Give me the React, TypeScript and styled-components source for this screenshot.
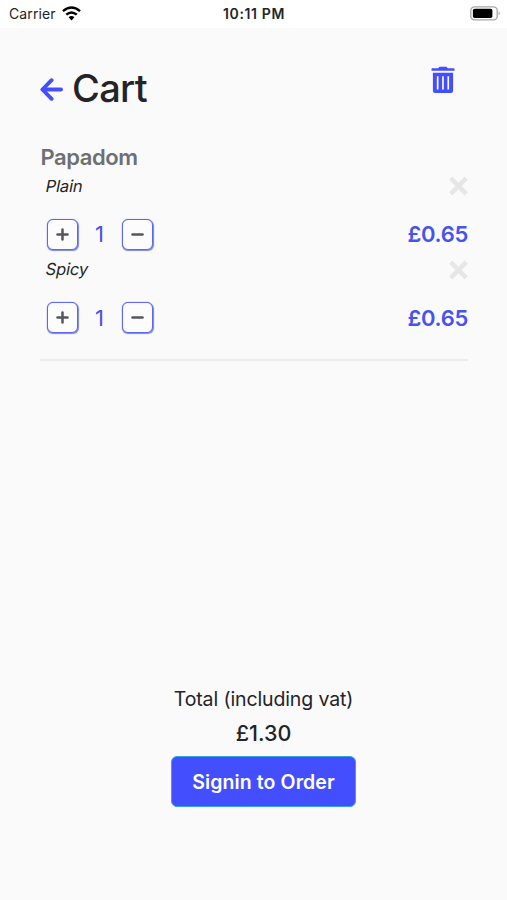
import React from "react";
import styled, { createGlobalStyle } from "styled-components";

const GlobalStyle = createGlobalStyle`
  *, *::before, *::after { box-sizing: border-box; }
  body {
    margin: 0;
    background: #fafafa;
    font-family: Inter, "Liberation Sans", sans-serif;
    color: #222428;
  }
  button { font: inherit; padding: 0; cursor: pointer; }
  svg { display: block; }
`;

const Screen = styled.div`
  width: 507px;
  height: 900px;
  display: flex;
  flex-direction: column;
  background: #fafafa;
  overflow: hidden;
`;

const StatusBar = styled.header`
  height: 28px;
  flex: none;
  display: grid;
  grid-template-columns: 1fr auto 1fr;
  align-items: center;
  padding: 0 6px 0 9px;
  background: #fff;
  font-size: 14px;
  line-height: 28px;
`;

const Carrier = styled.div`
  display: flex;
  align-items: center;
  gap: 6px;
  letter-spacing: 0.1px;

  svg { margin-top: -2px; }
`;

const Clock = styled.div`
  font-weight: 600;
  letter-spacing: 0.65px;
  margin: 0 2px 0 0;
`;

const BatterySlot = styled.div`
  justify-self: end;

  svg { margin-top: -2px; }
`;

const Content = styled.main`
  flex: 1;
  display: flex;
  flex-direction: column;
  padding: 34px 39px 93px 40px;
`;

const TitleRow = styled.div`
  display: flex;
  align-items: flex-start;
  justify-content: space-between;
  height: 82px;
`;

const TitleGroup = styled.div`
  display: flex;
  align-items: center;
  gap: 9px;
  height: 52px;
`;

const Title = styled.h1`
  margin: 0;
  font-size: 38px;
  font-weight: 500;
  letter-spacing: -0.7px;
  line-height: 52px;
`;

const IconButton = styled.button`
  border: 0;
  background: none;
  color: #434fff;
`;

const BackButton = styled(IconButton)`
  padding-top: 3px;
`;

const TrashButton = styled(IconButton)`
  margin: 4px 13px 0 0;
`;

const Category = styled.section`
  border-bottom: 2px solid #ececec;
  height: 217px;
`;

const CategoryName = styled.h2`
  margin: 0;
  height: 28px;
  padding-left: 0.5px;
  font-size: 22px;
  font-weight: 600;
  letter-spacing: -0.45px;
  line-height: 26px;
  color: #6c7075;
`;

const CartItem = styled.article`
  height: 83.5px;
`;

const ItemHeader = styled.div`
  display: flex;
  align-items: center;
  justify-content: space-between;
  height: 28px;
  padding-left: 6px;
`;

const Variant = styled.span`
  font-size: 16.5px;
  letter-spacing: -0.15px;
  line-height: 26px;
  margin-bottom: 1px;
  transform: skewX(-11deg);
`;

const RemoveButton = styled(IconButton)`
  color: #e6e6e7;
`;

const ItemFooter = styled.div`
  display: flex;
  align-items: center;
  justify-content: space-between;
  height: 32px;
  margin-top: 18px;
  padding-left: 7px;
  color: #4753f0;
  font-size: 22px;
`;

const Stepper = styled.div`
  display: flex;
  align-items: center;
`;

const StepButton = styled.button`
  display: flex;
  align-items: center;
  justify-content: center;
  width: 31px;
  height: 31px;
  border: 1px solid #5b66f5;
  border-radius: 6px;
  background: #fcfcfc;
  color: #55565c;
  box-shadow: 0.5px 1px 1px #8086d8, 0 0 1px #7d86f5;
`;

const Quantity = styled.span`
  width: 44px;
  padding-right: 1px;
  text-align: center;
`;

const Price = styled.span`
  font-weight: 600;
  letter-spacing: -0.3px;
`;

const Summary = styled.footer`
  display: flex;
  flex-direction: column;
  align-items: center;
  align-self: center;
  margin-top: auto;
  margin-left: 19px;
`;

const TotalLabel = styled.div`
  font-size: 19.5px;
  letter-spacing: -0.12px;
  line-height: 34px;
`;

const TotalAmount = styled.div`
  font-size: 21.5px;
  font-weight: 500;
  line-height: 34px;
  margin-bottom: 6px;
`;

const OrderButton = styled.button`
  width: 185px;
  height: 51px;
  border: 1px solid #36a5dc;
  border-radius: 6px;
  background: #434fff;
  color: #fff;
  font-size: 19.5px;
  font-weight: 600;
  letter-spacing: 0.1px;
`;

const WifiIcon = () => (
  <svg width="19" height="15" viewBox="0 0 18 14" fill="none" stroke="#000" strokeWidth="2.3">
    <path d="M.9 4.8Q9-2.1 17.1 4.8" />
    <path d="M4 8.1q5-4.3 10 0" />
    <path d="M9 13.6 6.2 10.6q2.8-2.3 5.6 0Z" fill="#000" stroke="none" />
  </svg>
);

const BatteryIcon = () => (
  <svg width="31" height="15" viewBox="0 0 31 15">
    <rect x=".8" y=".8" width="26.4" height="13" rx="3.6" fill="#fff" stroke="#a5a5a5" strokeWidth="1.3" />
    <rect x="2.9" y="2.8" width="19.5" height="9.2" rx="1.8" fill="#000" />
    <path d="M28.6 5q2.4 2.3 0 4.6Z" fill="#a5a5a5" />
  </svg>
);

const ArrowIcon = () => (
  <svg width="23" height="23" viewBox="0 0 23 23" fill="none" stroke="currentColor" strokeWidth="3.9" strokeLinecap="round" strokeLinejoin="round">
    <path d="M11.6 2.2 2.4 11.5l9.2 9.3" />
    <path d="M3 11.5h18" />
  </svg>
);

const TrashIcon = () => (
  <svg width="24" height="28" viewBox="0 0 24 28" fill="currentColor">
    <path d="M8.5.7h7l1.4 1.5h5.6c.7 0 1 .4 1 1v1.6H.5V3.2c0-.6.4-1 1-1h5.6Z" />
    <path fillRule="evenodd" d="M1.9 6.7h20.2v17.9a2.5 2.5 0 0 1-2.5 2.5H4.4a2.5 2.5 0 0 1-2.5-2.5ZM5.8 10.2v13.4h1.7V10.2Zm5.3 0v13.4h1.7V10.2Zm5.3 0v13.4h1.7V10.2Z" />
  </svg>
);

const CrossIcon = () => (
  <svg width="19" height="20" viewBox="0 0 19 20" stroke="currentColor" strokeWidth="4.5">
    <path d="m1.8 2.2 15.4 15.6M17.2 2.2 1.8 17.8" />
  </svg>
);

const StepIcon = ({ plus = false }: { plus?: boolean }) => (
  <svg width="13" height="13" viewBox="0 0 13 13" fill="none" stroke="currentColor" strokeWidth="2.5" strokeLinecap="round">
    <path d={plus ? "M1.5 6.5h10M6.5 1.5v10" : "M1.5 6.5h10"} />
  </svg>
);

const items = [
  { name: "Plain", quantity: 1, price: "£0.65" },
  { name: "Spicy", quantity: 1, price: "£0.65" },
];

export default function App() {
  return (
    <>
      <GlobalStyle />
      <Screen>
        <StatusBar>
          <Carrier>Carrier <WifiIcon /></Carrier>
          <Clock>10:11 PM</Clock>
          <BatterySlot><BatteryIcon /></BatterySlot>
        </StatusBar>
        <Content>
          <TitleRow>
            <TitleGroup>
              <BackButton aria-label="Back"><ArrowIcon /></BackButton>
              <Title>Cart</Title>
            </TitleGroup>
            <TrashButton aria-label="Empty cart"><TrashIcon /></TrashButton>
          </TitleRow>
          <Category>
            <CategoryName>Papadom</CategoryName>
            {items.map((item) => (
              <CartItem key={item.name}>
                <ItemHeader>
                  <Variant>{item.name}</Variant>
                  <RemoveButton aria-label={`Remove ${item.name}`}><CrossIcon /></RemoveButton>
                </ItemHeader>
                <ItemFooter>
                  <Stepper>
                    <StepButton aria-label="Add one"><StepIcon plus /></StepButton>
                    <Quantity>{item.quantity}</Quantity>
                    <StepButton aria-label="Remove one"><StepIcon /></StepButton>
                  </Stepper>
                  <Price>{item.price}</Price>
                </ItemFooter>
              </CartItem>
            ))}
          </Category>
          <Summary>
            <TotalLabel>Total (including vat)</TotalLabel>
            <TotalAmount>£1.30</TotalAmount>
            <OrderButton>Signin to Order</OrderButton>
          </Summary>
        </Content>
      </Screen>
    </>
  );
}
